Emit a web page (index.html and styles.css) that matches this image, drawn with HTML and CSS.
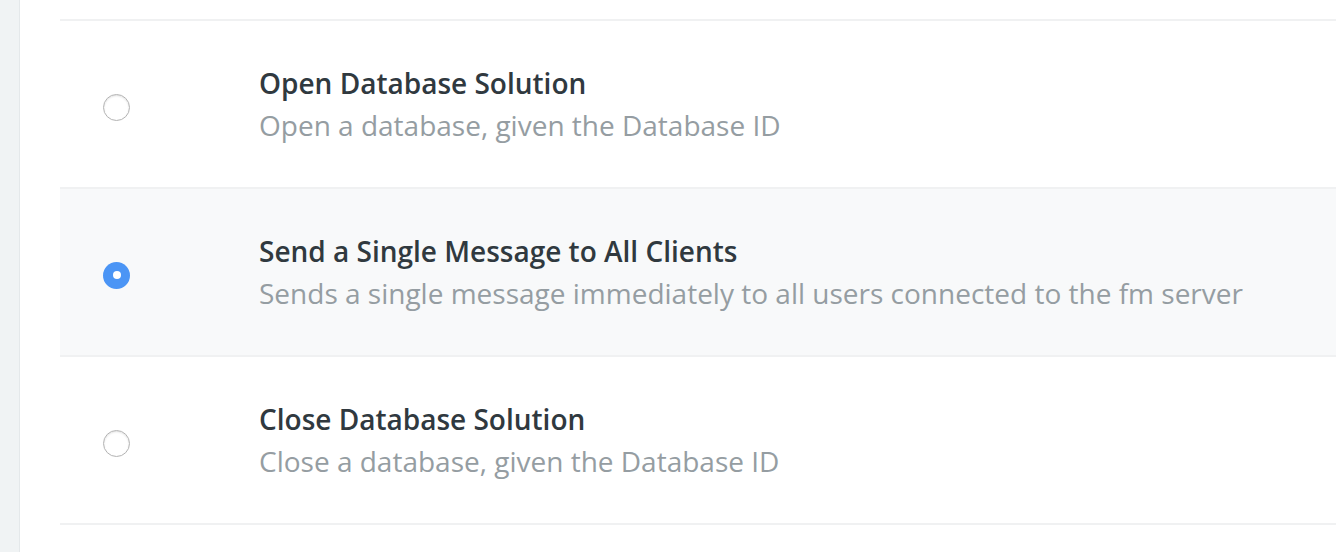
FILE: index.html
```html
<!DOCTYPE html>
<html>
<head>
<meta charset="utf-8">
<link rel="stylesheet" href="styles.css">
</head>
<body>
<div class="sidebar"></div>
<main class="main">
  <ul class="list">
    <li class="row">
      <span class="radio"></span>
      <div class="text">
        <div class="title">Open Database Solution</div>
        <div class="desc">Open a database, given the Database ID</div>
      </div>
    </li>
    <li class="row selected">
      <span class="radio checked"></span>
      <div class="text">
        <div class="title">Send a Single Message to All Clients</div>
        <div class="desc">Sends a single message immediately to all users connected to the fm server</div>
      </div>
    </li>
    <li class="row">
      <span class="radio"></span>
      <div class="text">
        <div class="title">Close Database Solution</div>
        <div class="desc">Close a database, given the Database ID</div>
      </div>
    </li>
  </ul>
</main>
</body>
</html>
```
FILE: styles.css
```css
html, body {
  margin: 0;
  padding: 0;
  height: 100%;
  background: #ffffff;
  font-family: "Open Sans", "Liberation Sans", sans-serif;
  overflow: hidden;
}
body {
  display: flex;
}
.sidebar {
  width: 19px;
  flex: 0 0 19px;
  background: #f0f3f4;
  border-right: 1px solid #e4e8ea;
}
.main {
  flex: 1;
  padding: 19px 0 0 40px;
}
.list {
  list-style: none;
  margin: 0;
  padding: 0;
  border-bottom: 2px solid #f0f1f2;
}
.row {
  display: flex;
  align-items: center;
  height: 166px;
  border-top: 2px solid #f0f1f2;
  padding-left: 43px;
}
.row.selected {
  background: #f8f9fa;
}
.radio {
  box-sizing: border-box;
  width: 27px;
  height: 27px;
  flex: 0 0 27px;
  border-radius: 50%;
  border: 1px solid #b3b3b3;
  background: #ffffff;
  box-shadow: inset 0 1px 2px rgba(0, 0, 0, 0.12);
  margin-top: 6px;
  margin-right: 129px;
  display: flex;
  align-items: center;
  justify-content: center;
}
.radio.checked {
  border: none;
  background: #4b95f5;
  box-shadow: none;
}
.radio.checked::after {
  content: "";
  width: 8px;
  height: 8px;
  border-radius: 50%;
  background: #ffffff;
}
.title {
  font-size: 28px;
  font-weight: 600;
  line-height: 42px;
  color: #30393f;
}
.desc {
  font-size: 28px;
  line-height: 42px;
  color: #959da2;
}
```
